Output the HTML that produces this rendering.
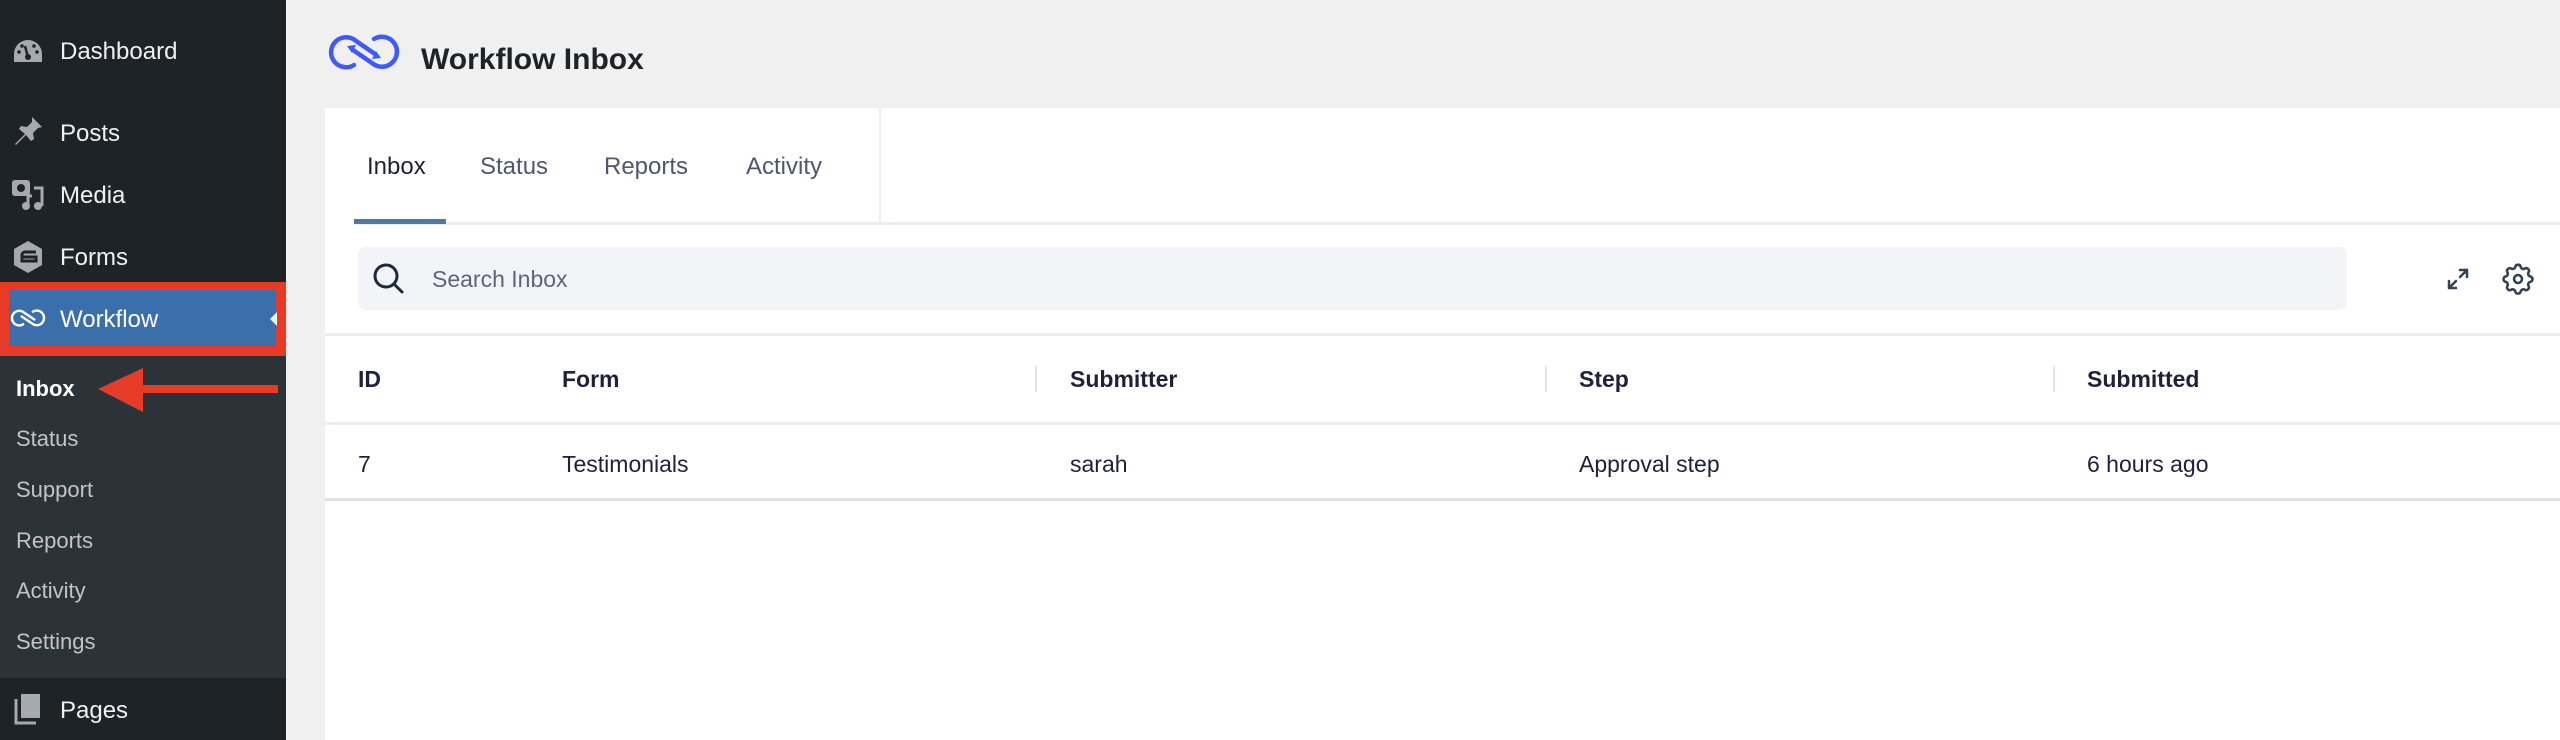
<!DOCTYPE html>
<html><head><meta charset="utf-8"><style>
*{margin:0;padding:0;box-sizing:border-box}
body{width:2560px;height:740px;overflow:hidden;background:#f0f0f1;font-family:"Liberation Sans",Arial,sans-serif;position:relative}
.sb{position:absolute;left:0;top:0;width:286px;height:740px;background:#1d2327}
.sub{position:absolute;left:0;top:356px;width:286px;height:322px;background:#2c3338}
.mi{position:absolute;left:60px;color:#f0f0f1;font-size:24px;line-height:30px}
.si{position:absolute;left:16px;color:#c3c4c7;font-size:22px;line-height:28px}
.ic{position:absolute;left:12px}
.t{position:absolute;font-size:24px;line-height:30px}
.h{position:absolute;font-size:23px;font-weight:bold;color:#1e2139;line-height:30px}
.c{position:absolute;font-size:23px;color:#1e2139;line-height:30px}
.sep{position:absolute;top:366px;width:2px;height:26px;background:#e3e4ea}
</style></head><body>
<div class="sb"></div>
<div class="sub"></div>
<svg class="ic" style="top:38px" width="32" height="28" viewBox="0 0 32 28"><path d="M16 2A14 14 0 0 0 2 16v8h28v-8A14 14 0 0 0 16 2z" fill="#a7aaad"/><circle cx="16" cy="19" r="3" fill="#1d2327"/><path d="M16 19L13 8" stroke="#1d2327" stroke-width="2.5"/><circle cx="7" cy="14" r="1.8" fill="#1d2327"/><circle cx="25" cy="14" r="1.8" fill="#1d2327"/><circle cx="10" cy="8" r="1.8" fill="#1d2327"/><circle cx="22" cy="8" r="1.8" fill="#1d2327"/></svg>
<div class="mi" style="top:37px">Dashboard</div>
<svg class="ic" style="top:115px" width="32" height="32" viewBox="0 0 32 32"><path d="M20 2l10 10-4 1-5 5 1 6-3 2-5-6-10 10 -1-1 10-10-6-5 2-3 6 1 5-5z" fill="#a7aaad"/></svg>
<div class="mi" style="top:119px">Posts</div>
<svg class="ic" style="top:178px" width="34" height="34" viewBox="0 0 34 34"><rect x="0" y="2" width="18" height="16" rx="3" fill="#a7aaad"/><circle cx="9" cy="10" r="4" fill="#1d2327"/><path d="M22 10h8v18" stroke="#a7aaad" stroke-width="3" fill="none"/><circle cx="26" cy="28" r="4" fill="#a7aaad"/><circle cx="14" cy="28" r="4" fill="#a7aaad"/><path d="M16 28v-10h4" stroke="#a7aaad" stroke-width="3" fill="none"/></svg>
<div class="mi" style="top:181px">Media</div>
<svg class="ic" style="top:240px" width="32" height="34" viewBox="0 0 32 34"><path d="M16 1l14 8v16l-14 8-14-8V9z" fill="#a7aaad"/><path d="M9 17h15v4H10v-6a3 3 0 0 1 3-3h11" stroke="#1d2327" stroke-width="3" fill="none"/></svg>
<div class="mi" style="top:243px">Forms</div>
<div style="position:absolute;left:0;top:282px;width:286px;height:74px;background:#e63b26"></div>
<div style="position:absolute;left:9px;top:290px;width:267px;height:56px;background:#3a6fab"></div>
<svg style="position:absolute;left:9px;top:307px" width="38" height="22" viewBox="0 0 78 44"><path d="M29 35A15 15 0 1 1 31 11L52 25M49 9A15 15 0 1 1 47 33L26 19" stroke="#fff" stroke-width="5" fill="none" stroke-linecap="round"/></svg>
<div class="mi" style="top:305px;color:#fff">Workflow</div>
<div style="position:absolute;left:270px;top:312px;width:0;height:0;border-top:7px solid transparent;border-bottom:7px solid transparent;border-right:7px solid #f0f0f1"></div>
<div class="si" style="top:375px;color:#fff;font-weight:bold">Inbox</div>
<div class="si" style="top:425px">Status</div>
<div class="si" style="top:476px">Support</div>
<div class="si" style="top:527px">Reports</div>
<div class="si" style="top:577px">Activity</div>
<div class="si" style="top:628px">Settings</div>
<svg style="position:absolute;left:98px;top:366px" width="182" height="46" viewBox="0 0 182 46"><path d="M0 23L45 2v44z" fill="#e63b26"/><rect x="44" y="19" width="136" height="8" fill="#e63b26"/></svg>
<svg class="ic" style="top:693px" width="32" height="32" viewBox="0 0 32 32"><rect x="9" y="1" width="19" height="24" fill="#a7aaad"/><path d="M4 6v24h20" stroke="#a7aaad" stroke-width="3" fill="none"/></svg>
<div class="mi" style="top:696px">Pages</div>

<svg style="position:absolute;left:325px;top:30px" width="78" height="44" viewBox="0 0 78 44"><path d="M29 35A15 15 0 1 1 31 11L50 24M49 9A15 15 0 1 1 47 33L28 20" stroke="#3d5afe" stroke-width="4.5" fill="none" stroke-linecap="round"/><path d="M56 28l-9 1 4-8zM22 16l9-1-4 8z" fill="#3d5afe"/></svg>
<div style="position:absolute;left:421px;top:43px;font-size:30px;font-weight:bold;color:#1d2327">Workflow Inbox</div>

<div style="position:absolute;left:325px;top:108px;right:0;bottom:0;background:#fff"></div>
<div style="position:absolute;left:879px;top:108px;width:2px;height:116px;background:#eceef3"></div>
<div style="position:absolute;left:354px;top:222px;right:0;height:3px;background:#eceef3"></div>
<div style="position:absolute;left:354px;top:219px;width:92px;height:5px;background:#4a7aa6"></div>
<div class="t" style="left:367px;top:152px;color:#1e2139">Inbox</div>
<div class="t" style="left:480px;top:152px;color:#50566e">Status</div>
<div class="t" style="left:604px;top:152px;color:#50566e">Reports</div>
<div class="t" style="left:746px;top:152px;color:#50566e">Activity</div>
<div style="position:absolute;left:358px;top:247px;width:1989px;height:63px;background:#f3f4f8;border-radius:8px"></div>
<svg style="position:absolute;left:372px;top:262px" width="34" height="34" viewBox="0 0 34 34"><circle cx="14" cy="14" r="11" stroke="#1e2a3b" stroke-width="3" fill="none"/><path d="M22 22l8 8" stroke="#1e2a3b" stroke-width="3" stroke-linecap="round"/></svg>
<div class="t" style="left:432px;top:264px;color:#5f6479;font-size:23px">Search Inbox</div>
<svg style="position:absolute;left:2445px;top:266px" width="26" height="26" viewBox="0 0 26 26"><path d="M15 4h7v7M22 4l-7 7M11 22H4v-7M4 22l7-7" stroke="#334155" stroke-width="2.5" fill="none" stroke-linecap="round" stroke-linejoin="round"/></svg>
<svg style="position:absolute;left:2499px;top:260px" width="38" height="38" viewBox="0 0 24 24"><path d="M10.3 4.3c.4-1.8 3-1.8 3.4 0a1.7 1.7 0 0 0 2.6 1.1c1.5-.9 3.3.8 2.4 2.4a1.7 1.7 0 0 0 1.1 2.6c1.8.4 1.8 3 0 3.4a1.7 1.7 0 0 0-1.1 2.6c.9 1.5-.8 3.3-2.4 2.4a1.7 1.7 0 0 0-2.6 1.1c-.4 1.8-3 1.8-3.4 0a1.7 1.7 0 0 0-2.6-1.1c-1.5.9-3.3-.8-2.4-2.4a1.7 1.7 0 0 0-1.1-2.6c-1.8-.4-1.8-3 0-3.4a1.7 1.7 0 0 0 1.1-2.6c-.9-1.5.8-3.3 2.4-2.4 1 .6 2.3.1 2.6-1.1z" stroke="#334155" stroke-width="1.6" fill="none"/><circle cx="12" cy="12" r="2.5" stroke="#334155" stroke-width="1.6" fill="none"/></svg>
<div style="position:absolute;left:325px;top:333px;right:0;height:3px;background:#eceef3"></div>
<div class="h" style="left:358px;top:364px">ID</div>
<div class="h" style="left:562px;top:364px">Form</div>
<div class="h" style="left:1070px;top:364px">Submitter</div>
<div class="h" style="left:1579px;top:364px">Step</div>
<div class="h" style="left:2087px;top:364px">Submitted</div>
<div class="sep" style="left:1035px"></div><div class="sep" style="left:1545px"></div><div class="sep" style="left:2053px"></div>
<div style="position:absolute;left:325px;top:422px;right:0;height:3px;background:#eceef3"></div>
<div class="c" style="left:358px;top:449px">7</div>
<div class="c" style="left:562px;top:449px">Testimonials</div>
<div class="c" style="left:1070px;top:449px">sarah</div>
<div class="c" style="left:1579px;top:449px">Approval step</div>
<div class="c" style="left:2087px;top:449px">6 hours ago</div>
<div style="position:absolute;left:325px;top:498px;right:0;height:3px;background:#dfe1e7"></div>
</body></html>
